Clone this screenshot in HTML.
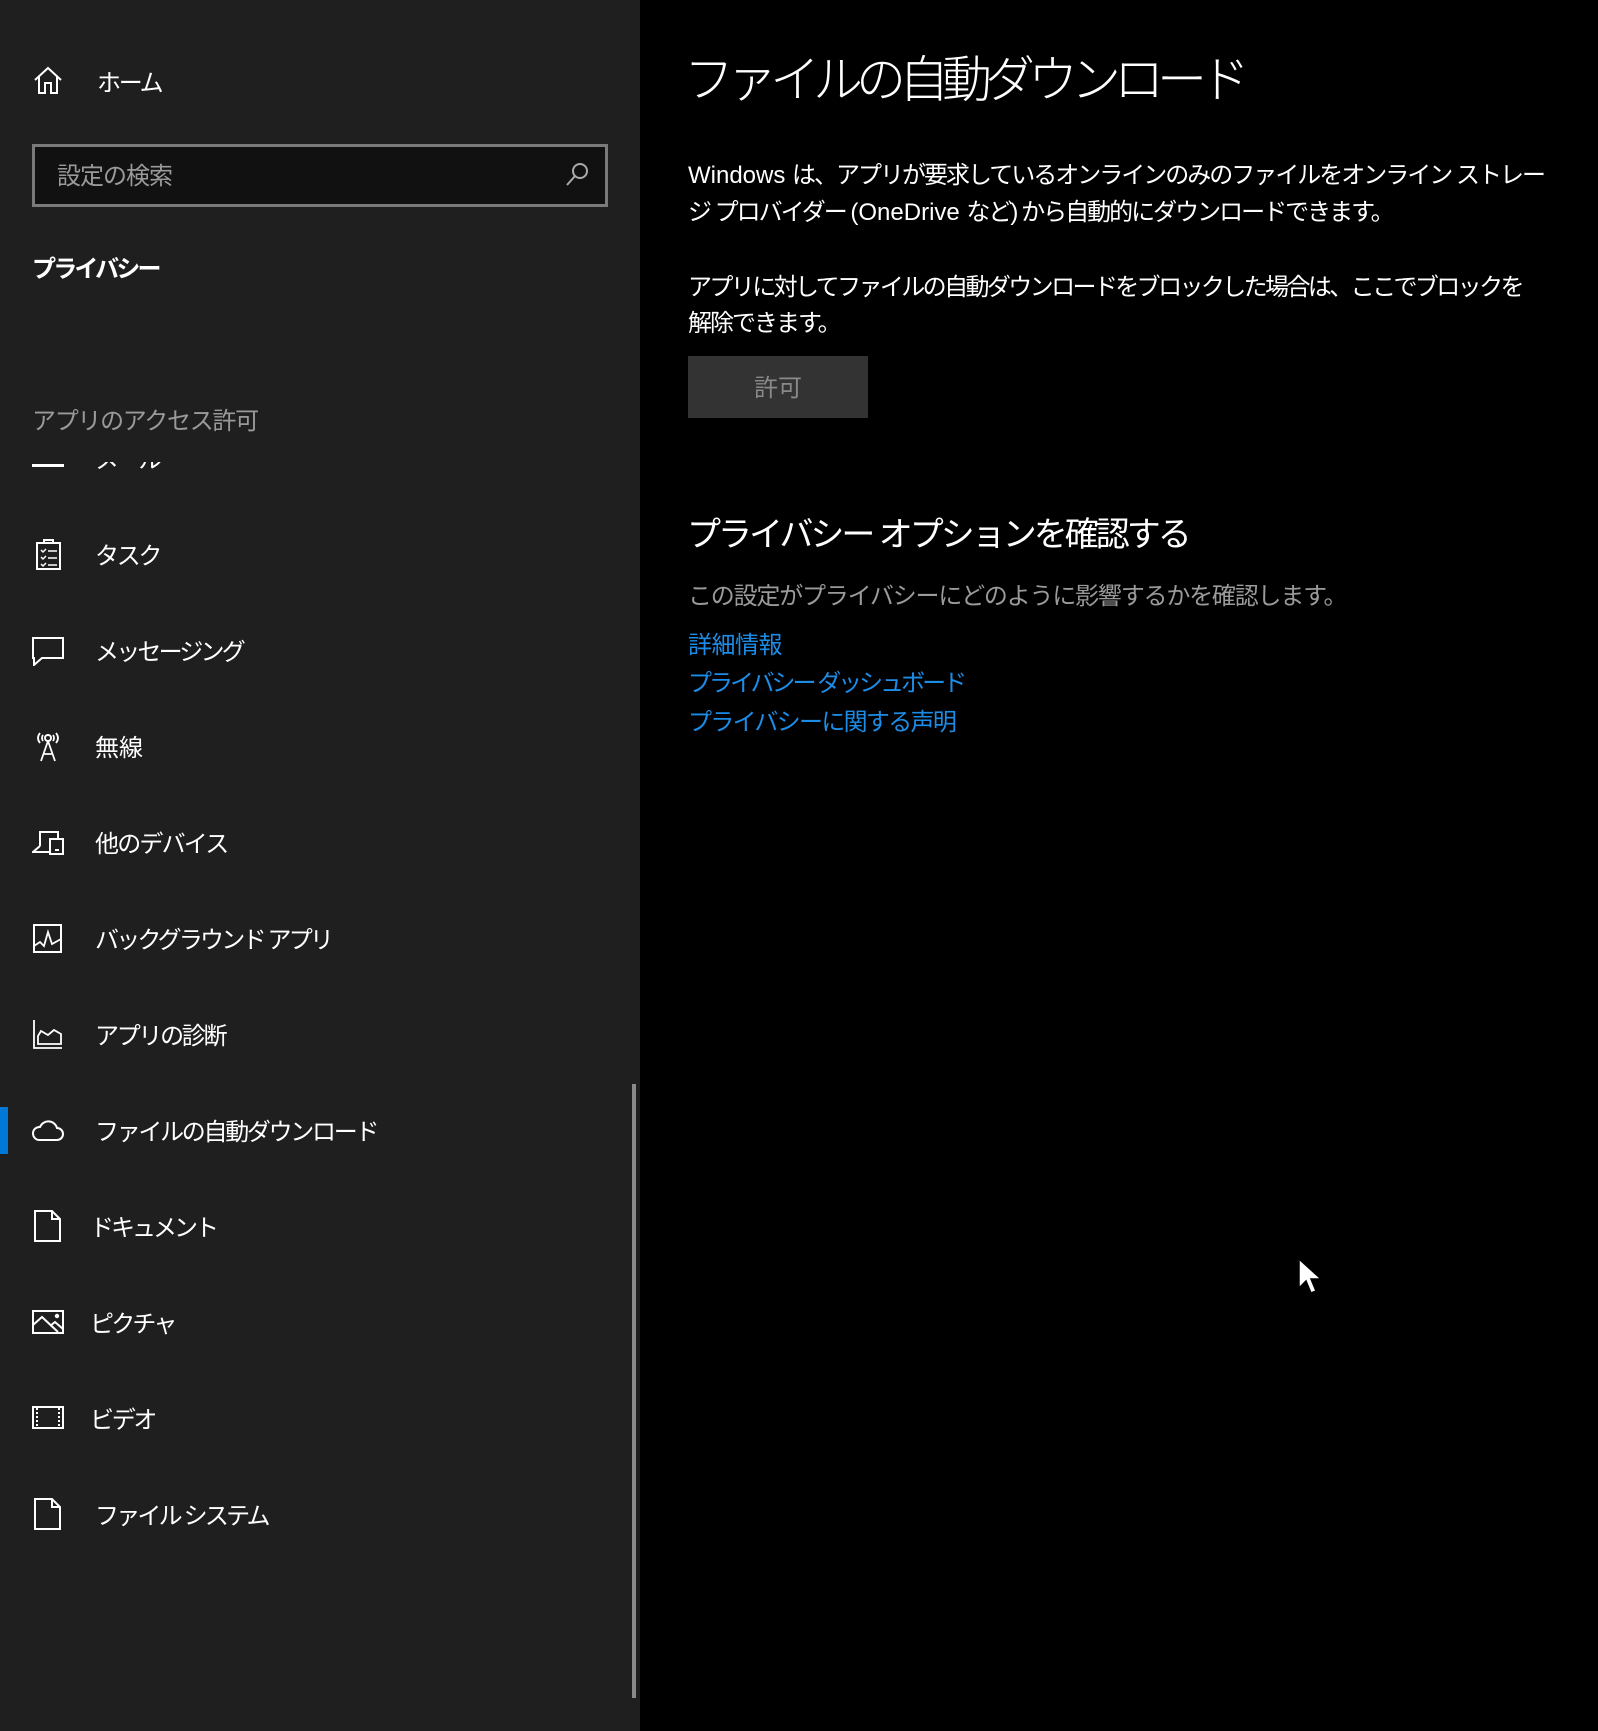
<!DOCTYPE html>
<html><head><meta charset="utf-8">
<style>
*{margin:0;padding:0;box-sizing:border-box}
html,body{width:1598px;height:1731px;overflow:hidden;background:#000}
body{position:relative;font-family:"Liberation Sans","Noto Sans CJK JP",sans-serif;color:#fff}
.side{position:absolute;left:0;top:0;width:640px;height:1731px;background:#1f1f1f}
.t{position:absolute;white-space:nowrap;line-height:32px;font-size:24px;letter-spacing:-2.3px}
.l{letter-spacing:0}
.ic{position:absolute;left:32px;width:32px;height:32px}
.ic svg{width:32px;height:32px;fill:none;stroke:#fff;stroke-width:2}
</style></head><body>
<div class="side">
  <div class="ic" style="top:64px"><svg viewBox="0 0 32 32"><path d="M3 16 L16 4 L29 16 M7 13 V29 H13 V19 H19 V29 H25 V13"/></svg></div>
  <div class="t" style="left:97px;top:68px">ホーム</div>

  <div style="position:absolute;left:32px;top:144px;width:576px;height:63px;border:3px solid #7a7a7a;background:#111"></div>
  <div class="t" style="left:57px;top:161px;color:#9a9a9a;letter-spacing:-1px">設定の検索</div>
  <svg style="position:absolute;left:564px;top:161px" width="26" height="26" viewBox="0 0 26 26"><circle cx="16" cy="10" r="7" fill="none" stroke="#aaa" stroke-width="2"/><path d="M11 15 L3 24" stroke="#aaa" stroke-width="2"/></svg>

  <div class="t" style="left:32px;top:254px;font-weight:bold;letter-spacing:-2.8px">プライバシー</div>
  <div class="t" style="left:32px;top:406px;color:#9a9a9a;letter-spacing:-1.3px">アプリのアクセス許可</div>

  <div style="position:absolute;left:0;top:462px;width:640px;height:40px;overflow:hidden">
    <div class="t" style="left:95px;top:-17px">メール</div>
    <div style="position:absolute;left:32px;top:2px;width:32px;height:3px;background:#fff"></div>
  </div>

  <div class="ic" style="top:538px"><svg viewBox="0 0 32 32"><rect x="5" y="5" width="23" height="26"/><path d="M12 5 V2 H21 V5"/><path d="M9 12 l2 2 l3 -3 M16 13 H25 M9 19 l2 2 l3 -3 M16 20 H25 M9 26 l2 2 l3 -3 M16 27 H25" stroke-width="1.5"/></svg></div>
  <div class="t" style="left:95px;top:541px">タスク</div>
  <div class="ic" style="top:634px"><svg viewBox="0 0 32 32"><path d="M1 4 H31 V24 H10 L2 31 V24 H1 Z"/></svg></div>
  <div class="t" style="left:95px;top:637px;letter-spacing:-2.8px">メッセージング</div>
  <div class="ic" style="top:730px"><svg viewBox="0 0 32 32"><circle cx="16" cy="8" r="3"/><path d="M16 11 L9 31 M16 11 L23 31 M11 24 H21 M8 3 Q4 8 8 13 M24 3 Q28 8 24 13 M11 5 Q9 8 11 11 M21 5 Q23 8 21 11" stroke-width="1.8"/></svg></div>
  <div class="t" style="left:95px;top:733px;letter-spacing:0">無線</div>
  <div class="ic" style="top:826px"><svg viewBox="0 0 32 32"><path d="M8 20 V6 H26 V12 M8 20 L1 26 H18"/><rect x="18" y="13" width="13" height="15"/><path d="M23 24 H27"/></svg></div>
  <div class="t" style="left:95px;top:829px;letter-spacing:-1.8px">他のデバイス</div>
  <div class="ic" style="top:922px"><svg viewBox="0 0 32 32"><rect x="2" y="3" width="27" height="27"/><path d="M2 24 L8 20 L12 24 L16 10 L20 22 L29 17" stroke-width="1.8"/></svg></div>
  <div class="t" style="left:95px;top:925px;letter-spacing:-2.8px">バックグラウンド アプリ</div>
  <div class="ic" style="top:1018px"><svg viewBox="0 0 32 32"><path d="M2 2 V30 H30 M6 26 H29 V16 L22 12 L16 17 L9 13 L6 18 Z" stroke-width="1.8"/></svg></div>
  <div class="t" style="left:95px;top:1021px">アプリの診断</div>

  <div style="position:absolute;left:0;top:1107px;width:8px;height:47px;background:#0078d7"></div>
  <div class="ic" style="top:1114px"><svg viewBox="0 0 32 32"><path d="M7 26 H25 A6 6 0 0 0 25 14 A9 9 0 0 0 8 13 A6.5 6.5 0 0 0 7 26 Z"/></svg></div>
  <div class="t" style="left:95px;top:1117px">ファイルの自動ダウンロード</div>

  <div class="ic" style="top:1210px"><svg viewBox="0 0 32 32"><path d="M3 1 H20 L28 9 V31 H3 Z M20 1 V9 H28"/></svg></div>
  <div class="t" style="left:90px;top:1213px;letter-spacing:-3px">ドキュメント</div>
  <div class="ic" style="top:1306px"><svg viewBox="0 0 32 32"><rect x="1" y="5" width="30" height="22"/><path d="M1 19 L10 11 L26 26 M18 20 L23 16 L31 23"/><circle cx="25" cy="10" r="1.2"/></svg></div>
  <div class="t" style="left:90px;top:1309px;letter-spacing:-2.8px">ピクチャ</div>
  <div class="ic" style="top:1402px"><svg viewBox="0 0 32 32"><rect x="1" y="5" width="30" height="21"/><path d="M5 6 V26 M27 6 V26" stroke-dasharray="2 2"/></svg></div>
  <div class="t" style="left:90px;top:1405px">ビデオ</div>
  <div class="ic" style="top:1498px"><svg viewBox="0 0 32 32"><path d="M3 1 H20 L28 9 V31 H3 Z M20 1 V9 H28"/></svg></div>
  <div class="t" style="left:95px;top:1501px;letter-spacing:-2.8px">ファイル システム</div>

  <div style="position:absolute;left:632px;top:1084px;width:4px;height:614px;background:#8a8a8a"></div>
</div>

<div class="t" style="left:684px;top:50px;font-size:50px;line-height:60px;letter-spacing:-7px;font-weight:300">ファイルの自動ダウンロード</div>

<div class="t" style="left:688px;top:160px;letter-spacing:-2px"><span class="l">Windows </span>は、アプリが要求しているオンラインのみのファイルをオンライン ストレー</div>
<div class="t" style="left:688px;top:197px;letter-spacing:-2px">ジ プロバイダー <span class="l">(OneDrive </span>など) から自動的にダウンロードできます。</div>
<div class="t" style="left:688px;top:272px;letter-spacing:-2.6px">アプリに対してファイルの自動ダウンロードをブロックした場合は、ここでブロックを</div>
<div class="t" style="left:688px;top:308px;letter-spacing:-2px">解除できます。</div>

<div style="position:absolute;left:688px;top:356px;width:180px;height:62px;background:#333"></div>
<div class="t" style="left:688px;top:373px;width:180px;text-align:center;color:#8a8a8a;letter-spacing:0">許可</div>

<div class="t" style="left:687px;top:515px;font-size:34px;line-height:40px;letter-spacing:-3px">プライバシー オプションを確認する</div>
<div class="t" style="left:688px;top:581px;color:#9a9a9a;letter-spacing:-1.2px">この設定がプライバシーにどのように影響するかを確認します。</div>
<div class="t" style="left:688px;top:630px;color:#1c8ce6;letter-spacing:-0.5px">詳細情報</div>
<div class="t" style="left:688px;top:668px;color:#1c8ce6;letter-spacing:-3px">プライバシー ダッシュボード</div>
<div class="t" style="left:688px;top:707px;color:#1c8ce6;letter-spacing:-1.7px">プライバシーに関する声明</div>

<svg style="position:absolute;left:1298px;top:1258px" width="26" height="40" viewBox="0 0 26 40"><path d="M1 1 V30 L8 23 L13 35 L18 33 L13 21 L23 21 Z" fill="#fff" stroke="#000" stroke-width="1.5"/></svg>
</body></html>
